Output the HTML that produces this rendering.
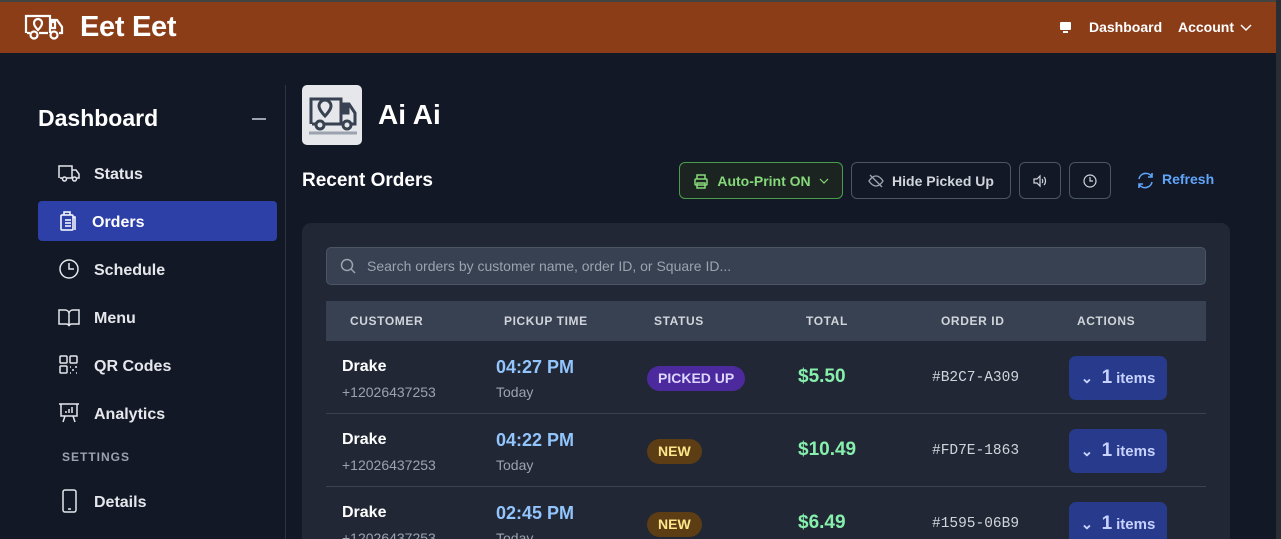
<!DOCTYPE html>
<html style="width:1281px;height:539px;overflow:hidden"><head><meta charset="utf-8"><style>
*{box-sizing:border-box;margin:0;padding:0}
body{width:1281px;height:539px;overflow:hidden;background:#121826;font-family:"Liberation Sans",Arial,sans-serif;color:#fff;position:relative}
.top{position:absolute;left:0;top:0;width:1281px;height:53px;background:#8B3D18;border-top:2px solid #444}
.rstrip{position:absolute;right:0;top:0;width:5px;height:539px;background:#2a2d33}
.abs{position:absolute}
svg{display:block}
.nav{position:absolute;left:38px;width:239px;height:40px;display:flex;align-items:center;font-size:16px;font-weight:bold;color:#e5e7eb}
.nav span{position:relative;top:2px}
.nav svg{margin-left:20px;margin-right:14px}
.btn{position:absolute;top:162px;height:37px;border:1px solid #4b5563;border-radius:6px;display:flex;align-items:center;justify-content:center;font-size:14px;font-weight:bold;color:#d1d5db}
.th{position:absolute;top:314px;font-size:12px;font-weight:bold;color:#d1d5db;letter-spacing:.6px}
.row{position:absolute;left:326px;width:880px;height:73px;border-bottom:1px solid #3b4352}
.row div{position:absolute}
.nm{left:16px;top:17px;font-size:16px;font-weight:bold}
.ph{left:16px;top:43px;font-size:14px;color:#9ca3af}
.tm{left:170px;top:16px;font-size:18px;font-weight:bold;color:#93c5fd}
.td{left:170px;top:43px;font-size:14px;color:#9ca3af}
.bd{top:25px;left:321px;height:25px;border-radius:13px;font-size:14px;font-weight:bold;line-height:25px;padding:0 11px}
.tot{left:472px;top:25px;font-size:19px;font-weight:bold;color:#86efac}
.oid{left:606px;top:29px;font-family:"Liberation Mono",monospace;font-size:14.5px;color:#d1d5db}
.it{left:743px;top:15px;width:98px;height:44px;background:#283a8c;border-radius:7px;font-size:15px;font-weight:bold;color:#c7d2fe;display:flex;align-items:center;justify-content:center}
.it b{font-size:19px;margin-right:4px}
</style></head><body>
<div class="top">
 <svg class="abs" style="left:24px;top:11px" width="40" height="28" viewBox="0 0 40 28" fill="none" stroke="#fff" stroke-width="2.2"><path d="M2 20V3h24v17M26 7h7l5 7v6h-3M3 20h3M15 20h9"/><rect x="27" y="9" width="4" height="6"/><circle cx="10" cy="22" r="3.5"/><circle cx="30" cy="22" r="3.5"/><path d="M14 17s-4-4-4-7a4 4 0 018 0c0 3-4 7-4 7z"/></svg>
 <div class="abs" style="left:80px;top:9px;font-size:29px;font-weight:bold;letter-spacing:-0.3px">Eet Eet</div>
 <svg class="abs" style="left:1059px;top:19px" width="13" height="12" viewBox="0 0 13 12"><rect x="1" y="1" width="11" height="8" rx="1" fill="#fff"/><rect x="4" y="10" width="5" height="2" fill="#fff"/></svg>
 <div class="abs" style="left:1089px;top:17px;font-size:14px;font-weight:bold">Dashboard</div>
 <div class="abs" style="left:1178px;top:17px;font-size:14px;font-weight:bold">Account</div>
 <svg class="abs" style="left:1240px;top:22px" width="12" height="8" viewBox="0 0 12 8" fill="none" stroke="#fff" stroke-width="1.5"><path d="M1 1l5 5 5-5"/></svg>
</div>
<div class="rstrip"></div>
<div class="abs" style="left:38px;top:105px;font-size:23px;font-weight:bold">Dashboard</div>
<div class="abs" style="left:252px;top:118px;width:14px;height:1.5px;background:#9ca3af"></div>
<div class="abs" style="left:285px;top:85px;width:1px;height:454px;background:#2d3340"></div>

<div class="nav" style="top:153px"><svg width="22" height="20" viewBox="0 0 22 20" fill="none" stroke="#e5e7eb" stroke-width="1.5"><path d="M1 15V3h13v12M14 7h4l3 4v4h-2M2 15h2M9 15h5"/><circle cx="6.5" cy="16" r="2"/><circle cx="16.5" cy="16" r="2"/></svg><span>Status</span></div>
<div class="nav" style="top:201px;background:#2c40a8;border-radius:4px;color:#fff"><svg width="20" height="22" viewBox="0 0 20 22" fill="none" stroke="#fff" stroke-width="1.5"><rect x="3" y="5" width="12" height="15" rx="1"/><path d="M6 5V2h6v3M7 10h6M7 13h6M7 16h6M15 7h2v13"/></svg><span>Orders</span></div>
<div class="nav" style="top:249px"><svg width="22" height="22" viewBox="0 0 22 22" fill="none" stroke="#e5e7eb" stroke-width="1.5"><circle cx="11" cy="11" r="9"/><path d="M11 5v6h5"/></svg><span>Schedule</span></div>
<div class="nav" style="top:297px"><svg width="22" height="20" viewBox="0 0 22 20" fill="none" stroke="#e5e7eb" stroke-width="1.5"><path d="M1 3h6a4 4 0 014 3v13a3 3 0 00-3-2H1zM21 3h-6a4 4 0 00-4 3v13a3 3 0 013-2h7z"/></svg><span>Menu</span></div>
<div class="nav" style="top:345px"><svg width="22" height="20" viewBox="0 0 22 20" fill="none" stroke="#e5e7eb" stroke-width="1.5"><rect x="2" y="1" width="7" height="7" rx="1"/><rect x="12" y="1" width="7" height="7" rx="1"/><rect x="2" y="11" width="7" height="7" rx="1"/><path d="M12 12h1M17 12h2M14 15h2M12 18h1M18 18h1"/></svg><span>QR Codes</span></div>
<div class="nav" style="top:393px"><svg width="22" height="22" viewBox="0 0 22 22" fill="none" stroke="#e5e7eb" stroke-width="1.5"><path d="M1 2h20M3 2v12h16V2M7 14l-2 6M15 14l2 6M8 11V9M11 11V7M14 11V5"/></svg><span>Analytics</span></div>
<div class="abs" style="left:62px;top:450px;font-size:12px;font-weight:bold;color:#9ca3af;letter-spacing:1px">SETTINGS</div>
<div class="nav" style="top:481px"><svg width="22" height="24" viewBox="0 0 22 24" fill="none" stroke="#e5e7eb" stroke-width="1.5"><rect x="5" y="1" width="13" height="22" rx="2"/><path d="M10 20h3"/></svg><span>Details</span></div>

<div class="abs" style="left:302px;top:85px;width:60px;height:60px;background:#e5e7eb;border-radius:5px"><svg style="margin:9px 0 0 5px" width="52" height="42" viewBox="0 0 52 42" fill="none" stroke="#374151" stroke-width="3"><path d="M4 30V5h30v25M34 10h8l6 9v11h-4M5 30h4M18 30h18"/><rect x="36" y="11" width="5" height="8" fill="#374151"/><circle cx="13" cy="31" r="4"/><circle cx="40" cy="31" r="4"/><path d="M18 22s-6-6-6-10a6 6 0 0112 0c0 4-6 10-6 10z"/><path d="M2 39h48" stroke="#9ca3af"/></svg></div>
<div class="abs" style="left:378px;top:99px;font-size:28px;font-weight:bold">Ai Ai</div>
<div class="abs" style="left:302px;top:170px;font-size:19px;font-weight:bold">Recent Orders</div>

<div class="btn" style="left:679px;width:164px;border-color:#4a9d4a;background:#1c2421;color:#86d97a"><svg width="16" height="16" viewBox="0 0 16 16" fill="none" stroke="#86d97a" stroke-width="1.5" style="margin-right:8px"><rect x="2" y="6" width="12" height="6" rx="1"/><path d="M4 6V2h8v4M4 10h8v5H4z"/></svg>Auto-Print ON<svg width="10" height="6" viewBox="0 0 10 6" fill="none" stroke="#86d97a" stroke-width="1.2" style="margin-left:8px"><path d="M1 1l4 4 4-4"/></svg></div>
<div class="btn" style="left:851px;width:160px"><svg width="16" height="16" viewBox="0 0 16 16" fill="none" stroke="#9ca3af" stroke-width="1.3" style="margin-right:8px"><path d="M1 8s3-5 7-5 7 5 7 5-3 5-7 5-7-5-7-5zM2 2l12 12"/></svg>Hide Picked Up</div>
<div class="btn" style="left:1019px;width:42px"><svg width="14" height="14" viewBox="0 0 14 14" fill="none" stroke="#d1d5db" stroke-width="1.2"><path d="M1 5h3l3-3v10l-3-3H1zM9 5c1 1 1 3 0 4M11 3c2 2 2 6 0 8"/></svg></div>
<div class="btn" style="left:1069px;width:42px"><svg width="14" height="14" viewBox="0 0 14 14" fill="none" stroke="#d1d5db" stroke-width="1.2"><circle cx="7" cy="7" r="6"/><path d="M7 3v4h3"/></svg></div>
<svg class="abs" style="left:1137px;top:172px" width="17" height="17" viewBox="0 0 17 17" fill="none" stroke="#60a5fa" stroke-width="1.6"><path d="M2 7a7 7 0 0113-2M15 1v4h-4M15 10a7 7 0 01-13 2M2 16v-4h4"/></svg>
<div class="abs" style="left:1162px;top:171px;font-size:14px;font-weight:bold;color:#60a5fa">Refresh</div>

<div class="abs" style="left:302px;top:223px;width:928px;height:316px;background:#212735;border-radius:9px 9px 0 0"></div>
<div class="abs" style="left:326px;top:247px;width:880px;height:38px;background:#374151;border:1px solid #4b5563;border-radius:5px"></div>
<svg class="abs" style="left:340px;top:258px" width="16" height="16" viewBox="0 0 16 16" fill="none" stroke="#9ca3af" stroke-width="1.5"><circle cx="7" cy="7" r="5.5"/><path d="M11 11l4 4"/></svg>
<div class="abs" style="left:367px;top:258px;font-size:14px;color:#9ca3af">Search orders by customer name, order ID, or Square ID...</div>
<div class="abs" style="left:326px;top:301px;width:880px;height:40px;background:#374151"></div>
<div class="th" style="left:350px">CUSTOMER</div>
<div class="th" style="left:504px">PICKUP TIME</div>
<div class="th" style="left:654px">STATUS</div>
<div class="th" style="left:806px">TOTAL</div>
<div class="th" style="left:941px">ORDER ID</div>
<div class="th" style="left:1077px">ACTIONS</div>

<div class="row" style="top:341px"><div class="nm">Drake</div><div class="ph">+12026437253</div><div class="tm">04:27 PM</div><div class="td">Today</div><div class="bd" style="background:#4c2a9e;color:#ddd6fe">PICKED UP</div><div class="tot">$5.50</div><div class="oid">#B2C7-A309</div><div class="it">⌄&nbsp;&nbsp;<b>1</b>items</div></div>
<div class="row" style="top:414px"><div class="nm">Drake</div><div class="ph">+12026437253</div><div class="tm">04:22 PM</div><div class="td">Today</div><div class="bd" style="background:#5c3d14;color:#fde68a">NEW</div><div class="tot">$10.49</div><div class="oid">#FD7E-1863</div><div class="it">⌄&nbsp;&nbsp;<b>1</b>items</div></div>
<div class="row" style="top:487px"><div class="nm">Drake</div><div class="ph">+12026437253</div><div class="tm">02:45 PM</div><div class="td">Today</div><div class="bd" style="background:#5c3d14;color:#fde68a">NEW</div><div class="tot">$6.49</div><div class="oid">#1595-06B9</div><div class="it">⌄&nbsp;&nbsp;<b>1</b>items</div></div>
</body></html>
